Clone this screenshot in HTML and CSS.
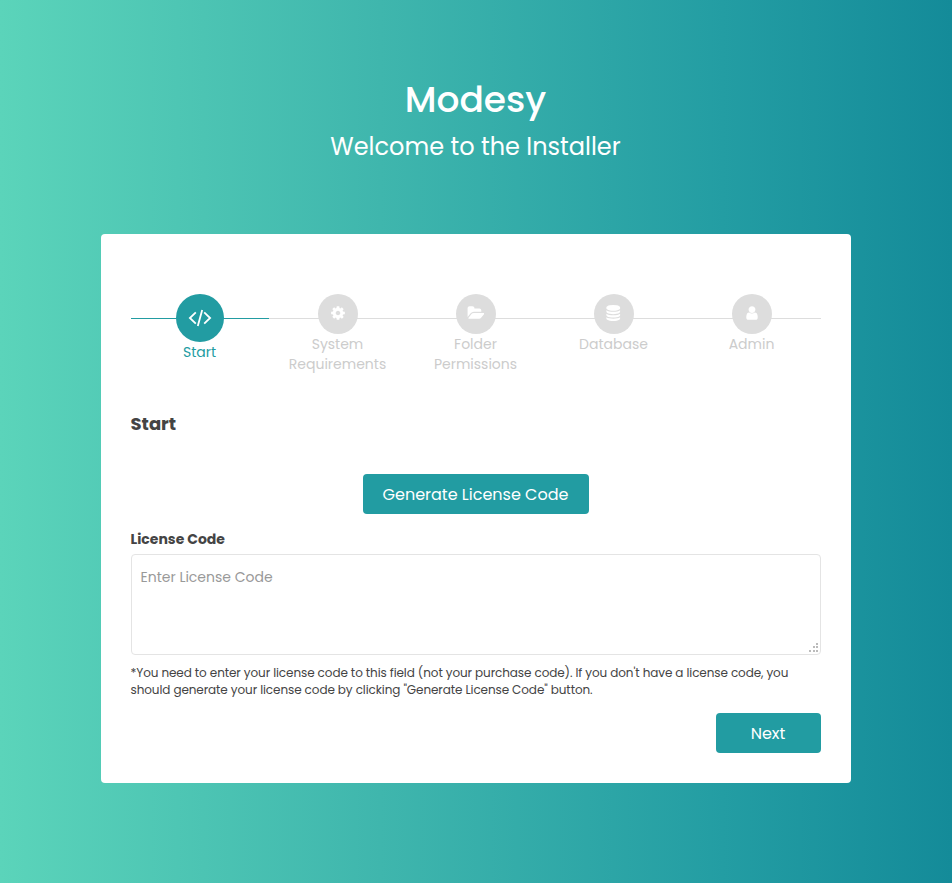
FILE: index.html
```html
<!DOCTYPE html>
<html lang="en">
<head>
<meta charset="utf-8">
<title>Modesy - Installer</title>
<link rel="stylesheet" href="styles.css">
</head>
<body>
<header class="logo-cnt">
  <h1>Modesy</h1>
  <p>Welcome to the Installer</p>
</header>
<main class="install-box">
  <div class="steps">
    <div class="step active">
      <div class="step-icon"><svg width="24" height="18" viewBox="0 0 24 18" fill="none" stroke="#fff" stroke-width="1.8"><path d="M7.8 3.4 1.9 9l5.9 5.6M16.2 3.4 22.1 9l-5.9 5.6M14.2.9 9.8 17.1"/></svg></div>
      <p>Start</p>
    </div>
    <div class="step">
      <div class="step-icon"><svg width="16" height="16" viewBox="0 0 1792 1792"><path d="M1152 896q0-106-75-181t-181-75-181 75-75 181 75 181 181 75 181-75 75-181zm512-109v222q0 12-8 23t-20 13l-185 28q-19 54-39 91 35 50 107 138 10 12 10 25t-9 23q-27 37-99 108t-94 71q-12 0-26-9l-138-108q-44 23-91 38-16 136-29 186-7 28-36 28h-222q-14 0-24.5-8.5t-11.5-21.5l-28-184q-49-16-90-37l-141 107q-10 9-25 9-14 0-25-11-126-114-165-168-7-10-7-23 0-12 8-23 15-21 51-66.5t54-70.5q-27-50-41-99l-183-27q-13-2-21-12.5t-8-23.5v-222q0-12 8-23t19-13l186-28q14-46 39-92-40-57-107-138-10-12-10-24 0-10 9-23 26-36 98.5-107.5t94.5-71.5q13 0 26 10l138 107q44-23 91-38 16-136 29-186 7-28 36-28h222q14 0 24.5 8.5t11.5 21.5l28 184q49 16 90 37l142-107q9-9 24-9 13 0 25 10 129 119 165 170 7 8 7 22 0 12-8 23-15 21-51 66.5t-54 70.5q26 50 41 98l183 28q13 2 21 12.5t8 23.5z"/></svg></div>
      <p>System<br>Requirements</p>
    </div>
    <div class="step">
      <div class="step-icon"><svg width="17.4" height="16" viewBox="0 0 1943 1792"><path d="M1943 952q0 31-31 66l-336 396q-43 51-120.5 86.5t-143.5 35.5h-1088q-34 0-60.5-13t-26.5-43q0-31 31-66l336-396q43-51 120.5-86.5t143.5-35.5h1088q34 0 60.5 13t26.5 43zm-343-344v160h-832q-94 0-197 47.5t-164 119.5l-337 396-5 6q0-4-.5-12.5t-.5-12.5v-960q0-92 66-158t158-66h320q92 0 158 66t66 158v32h544q92 0 158 66t66 158z"/></svg></div>
      <p>Folder<br>Permissions</p>
    </div>
    <div class="step">
      <div class="step-icon"><svg width="16.5" height="16" viewBox="0 0 1792 1792"><path d="M896 768q237 0 443-43t325-127v170q0 69-103 128t-280 93.5-385 34.5-385-34.5-280-93.5-103-128v-170q119 84 325 127t443 43zm0 768q237 0 443-43t325-127v170q0 69-103 128t-280 93.5-385 34.5-385-34.5-280-93.5-103-128v-170q119 84 325 127t443 43zm0-384q237 0 443-43t325-127v170q0 69-103 128t-280 93.5-385 34.5-385-34.5-280-93.5-103-128v-170q119 84 325 127t443 43zm0-1152q208 0 385 34.5t280 93.5 103 128v128q0 69-103 128t-280 93.5-385 34.5-385-34.5-280-93.5-103-128v-128q0-69 103-128t280-93.5 385-34.5z"/></svg></div>
      <p>Database</p>
    </div>
    <div class="step">
      <div class="step-icon"><svg width="16" height="16" viewBox="0 0 1792 1792"><path d="M1536 1399q0 109-62.5 187t-150.5 78h-854q-88 0-150.5-78t-62.5-187q0-85 8.5-160.5t31.5-152 58.5-131 94-89 134.5-34.5q131 128 313 128t313-128q76 0 134.5 34.5t94 89 58.5 131 31.5 152 8.5 160.5zm-256-887q0 159-112.5 271.5t-271.5 112.5-271.5-112.5-112.5-271.5 112.5-271.5 271.5-112.5 271.5 112.5 112.5 271.5z"/></svg></div>
      <p>Admin</p>
    </div>
  </div>
  <h2>Start</h2>
  <div class="generate"><button class="btn btn-generate" type="button">Generate License Code</button></div>
  <label for="license">License Code</label>
  <div class="field">
    <textarea id="license" placeholder="Enter License Code"></textarea>
    <svg class="grip" width="9" height="9" viewBox="0 0 9 9" shape-rendering="crispEdges"><path d="M7 0h2v2H7zM4 3h2v2H4zM7 3h2v2H7zM0 7h2v2H0zM4 7h2v2H4zM7 7h2v2H7z"/></svg>
  </div>
  <p class="note">*You need to enter your license code to this field (not your purchase code). If you don't have a license code, you<br>should generate your license code by clicking "Generate License Code" button.</p>
  <div class="buttons"><button class="btn btn-next" type="button">Next</button></div>
</main>
</body>
</html>
```
FILE: styles.css
```css
* { box-sizing: border-box; }
body {
  margin: 0;
  min-height: 883px;
  padding: 78px 1px 0 0;
  font: 14px/20px Poppins, Inter, sans-serif;
  color: #444;
  background: linear-gradient(to right, #5bd4ba 0%, #3fb6ad 40%, #239da3 76%, #148b99 100%);
}
h1, h2, p { margin: 0; }
.logo-cnt { height: 156px; text-align: center; color: #fff; }
h1 { font-size: 36px; font-weight: 500; line-height: 44px; }
.logo-cnt p { margin-top: 7px; font-size: 24px; line-height: 36px; }
.install-box {
  width: 750px;
  height: 549px;
  margin: 0 auto;
  padding: 60px 30px 30px;
  border-radius: 4px;
  background: #fff;
}
.steps {
  display: grid;
  grid-template-columns: repeat(5, 138px);
  height: 119px;
  background: linear-gradient(#ddd, #ddd) 0 24px / 100% 1px no-repeat;
}
.step { text-align: center; color: #ccc; }
.step.active { color: #229ca2; background: linear-gradient(#229ca2, #229ca2) 0 24px / 100% 1px no-repeat; }
.step-icon {
  display: flex;
  align-items: center;
  justify-content: center;
  width: 40px;
  height: 40px;
  margin: 0 auto;
  padding-bottom: 2px;
  border-radius: 50%;
  background: #ddd;
  fill: #fff;
}
.active .step-icon { width: 48px; height: 48px; padding-bottom: 1px; background: #229ca2; }
h2 { font-size: 18px; font-weight: 700; line-height: 22px; }
.generate { margin-top: 39px; text-align: center; }
.btn {
  display: block;
  height: 40px;
  padding: 1px 0 0;
  border: 0;
  border-radius: 4px;
  background: #229ca2;
  color: #fff;
  font: 16px/39px Poppins, Inter, sans-serif;
}
.btn-generate { width: 226px; margin: 0 auto; }
label { display: block; margin-top: 15px; font-weight: 700; }
.field { position: relative; margin-top: 5px; }
textarea {
  display: block;
  width: 100%;
  height: 101px;
  padding: 12px 9px;
  border: 1px solid #e4e4e4;
  border-radius: 4px;
  resize: none;
  outline: 0;
  background: #fff;
  font: 14px/20px Poppins, Inter, sans-serif;
}
textarea::placeholder { color: #999; opacity: 1; }
.grip { position: absolute; right: 3px; bottom: 3px; fill: #bbb; }
.note { margin-top: 9px; font-size: 12px; line-height: 17px; letter-spacing: -.095px; white-space: nowrap; }
.buttons { display: flex; justify-content: flex-end; margin-top: 15px; }
.btn-next { width: 105px; }
```
